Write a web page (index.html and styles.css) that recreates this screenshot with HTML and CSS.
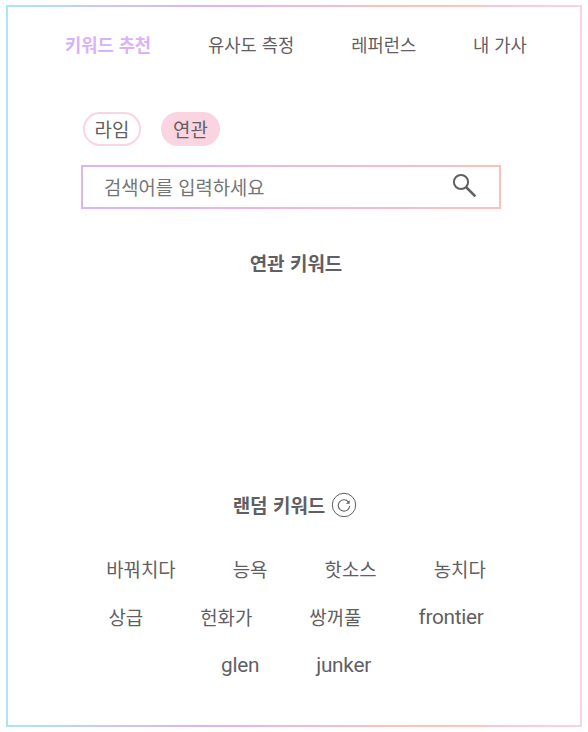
FILE: index.html
```
<!DOCTYPE html>
<html lang="ko">
<head>
<meta charset="utf-8">
<title>키워드 추천</title>
<link rel="stylesheet" href="styles.css">
</head>
<body>
<main class="frame">
  <nav class="nav">
    <a class="active">키워드 추천</a>
    <a>유사도 측정</a>
    <a>레퍼런스</a>
    <a>내 가사</a>
  </nav>
  <div class="modes">
    <button class="mode">라임</button>
    <button class="mode selected">연관</button>
  </div>
  <div class="search">
    <span class="placeholder">검색어를 입력하세요</span>
    <svg class="search-icon" width="26" height="26" viewBox="0 0 26 26" fill="none" stroke="#625f64">
      <circle cx="9" cy="9" r="7.1" stroke-width="2"/>
      <path d="M14 14l9.3 9.3" stroke-width="2.6"/>
    </svg>
  </div>
  <section class="related"><h2>연관 키워드</h2></section>
  <section class="random">
    <h2>랜덤 키워드</h2>
    <svg width="26" height="26" viewBox="0 0 26 26" fill="none" stroke="#625f64">
      <circle cx="13" cy="13" r="11.7" stroke-width="1"/>
      <path d="M17.4 9.8A5.7 5.7 0 1 0 18.7 13.7" stroke-width="1.1"/>
      <path d="M18.4 8.7v2.8h-3z" fill="#625f64" stroke-width=".5"/>
    </svg>
  </section>
  <div class="words">
    <div class="row"><span>바꿔치다</span><span>능욕</span><span>핫소스</span><span>농치다</span></div>
    <div class="row"><span>상급</span><span>헌화가</span><span>쌍꺼풀</span><span class="latin">frontier</span></div>
    <div class="row"><span class="latin">glen</span><span class="latin">junker</span></div>
  </div>
</main>
</body>
</html>
```
FILE: styles.css
```
* { box-sizing: border-box; }
body {
  margin: 0;
  background: #fff;
  color: #625f64;
  font-family: "Noto Sans CJK KR", sans-serif;
  font-size: 18.9px;
}
.frame {
  width: 576px;
  height: 722px;
  margin: 5px 0 0 6px;
  border: 2px solid;
  border-image: linear-gradient(to right, #ace4f8, #dbb2fc 33%, #ffbfb9 66%, #ffc4bc 83%, #f5c9d6 84%, #fbd3e0) 1;
  display: flex;
  flex-direction: column;
}
.nav {
  display: flex;
  gap: 57px;
  margin: 25px 0 0 57px;
  font-size: 17.65px;
  line-height: 26px;
  white-space: nowrap;
}
.active { color: #d9b3fa; font-weight: 700; }
.modes {
  display: flex;
  gap: 20px;
  margin: 54px 0 0 75px;
}
.mode {
  width: 58px;
  height: 34px;
  padding: 0;
  border: 2px solid #fad4e0;
  border-radius: 17px;
  background: #fff;
  color: inherit;
  font: inherit;
  line-height: 30px;
}
.selected { width: 59px; background: #fad4e0; }
.search {
  width: 420px;
  height: 44px;
  margin: 19px 0 0 73px;
  padding: 0 21px 0 21px;
  border: 2px solid;
  border-image: linear-gradient(to right, #dbb2fc, #ffbfb9) 1;
  display: flex;
  align-items: center;
  justify-content: space-between;
}
.placeholder { margin-top: -2px; color: #757575; font-size: 18.75px; }
.search-icon { margin-top: -2px; }
h2 { margin: 0; font-size: 19px; line-height: 28px; font-weight: 700; }
.related { height: 200px; margin-top: 40px; padding-left: 4px; text-align: center; }
.random {
  display: flex;
  justify-content: center;
  align-items: center;
  gap: 6px;
  margin-top: 42px;
  padding-left: 2px;
  height: 28px;
}
.words { margin-top: 36px; padding-left: 4px; }
.row {
  display: flex;
  justify-content: center;
  gap: 57px;
  height: 48px;
  line-height: 28px;
}
.latin { font-family: Roboto, sans-serif; font-size: 20.8px; letter-spacing: -0.28px; }
```
